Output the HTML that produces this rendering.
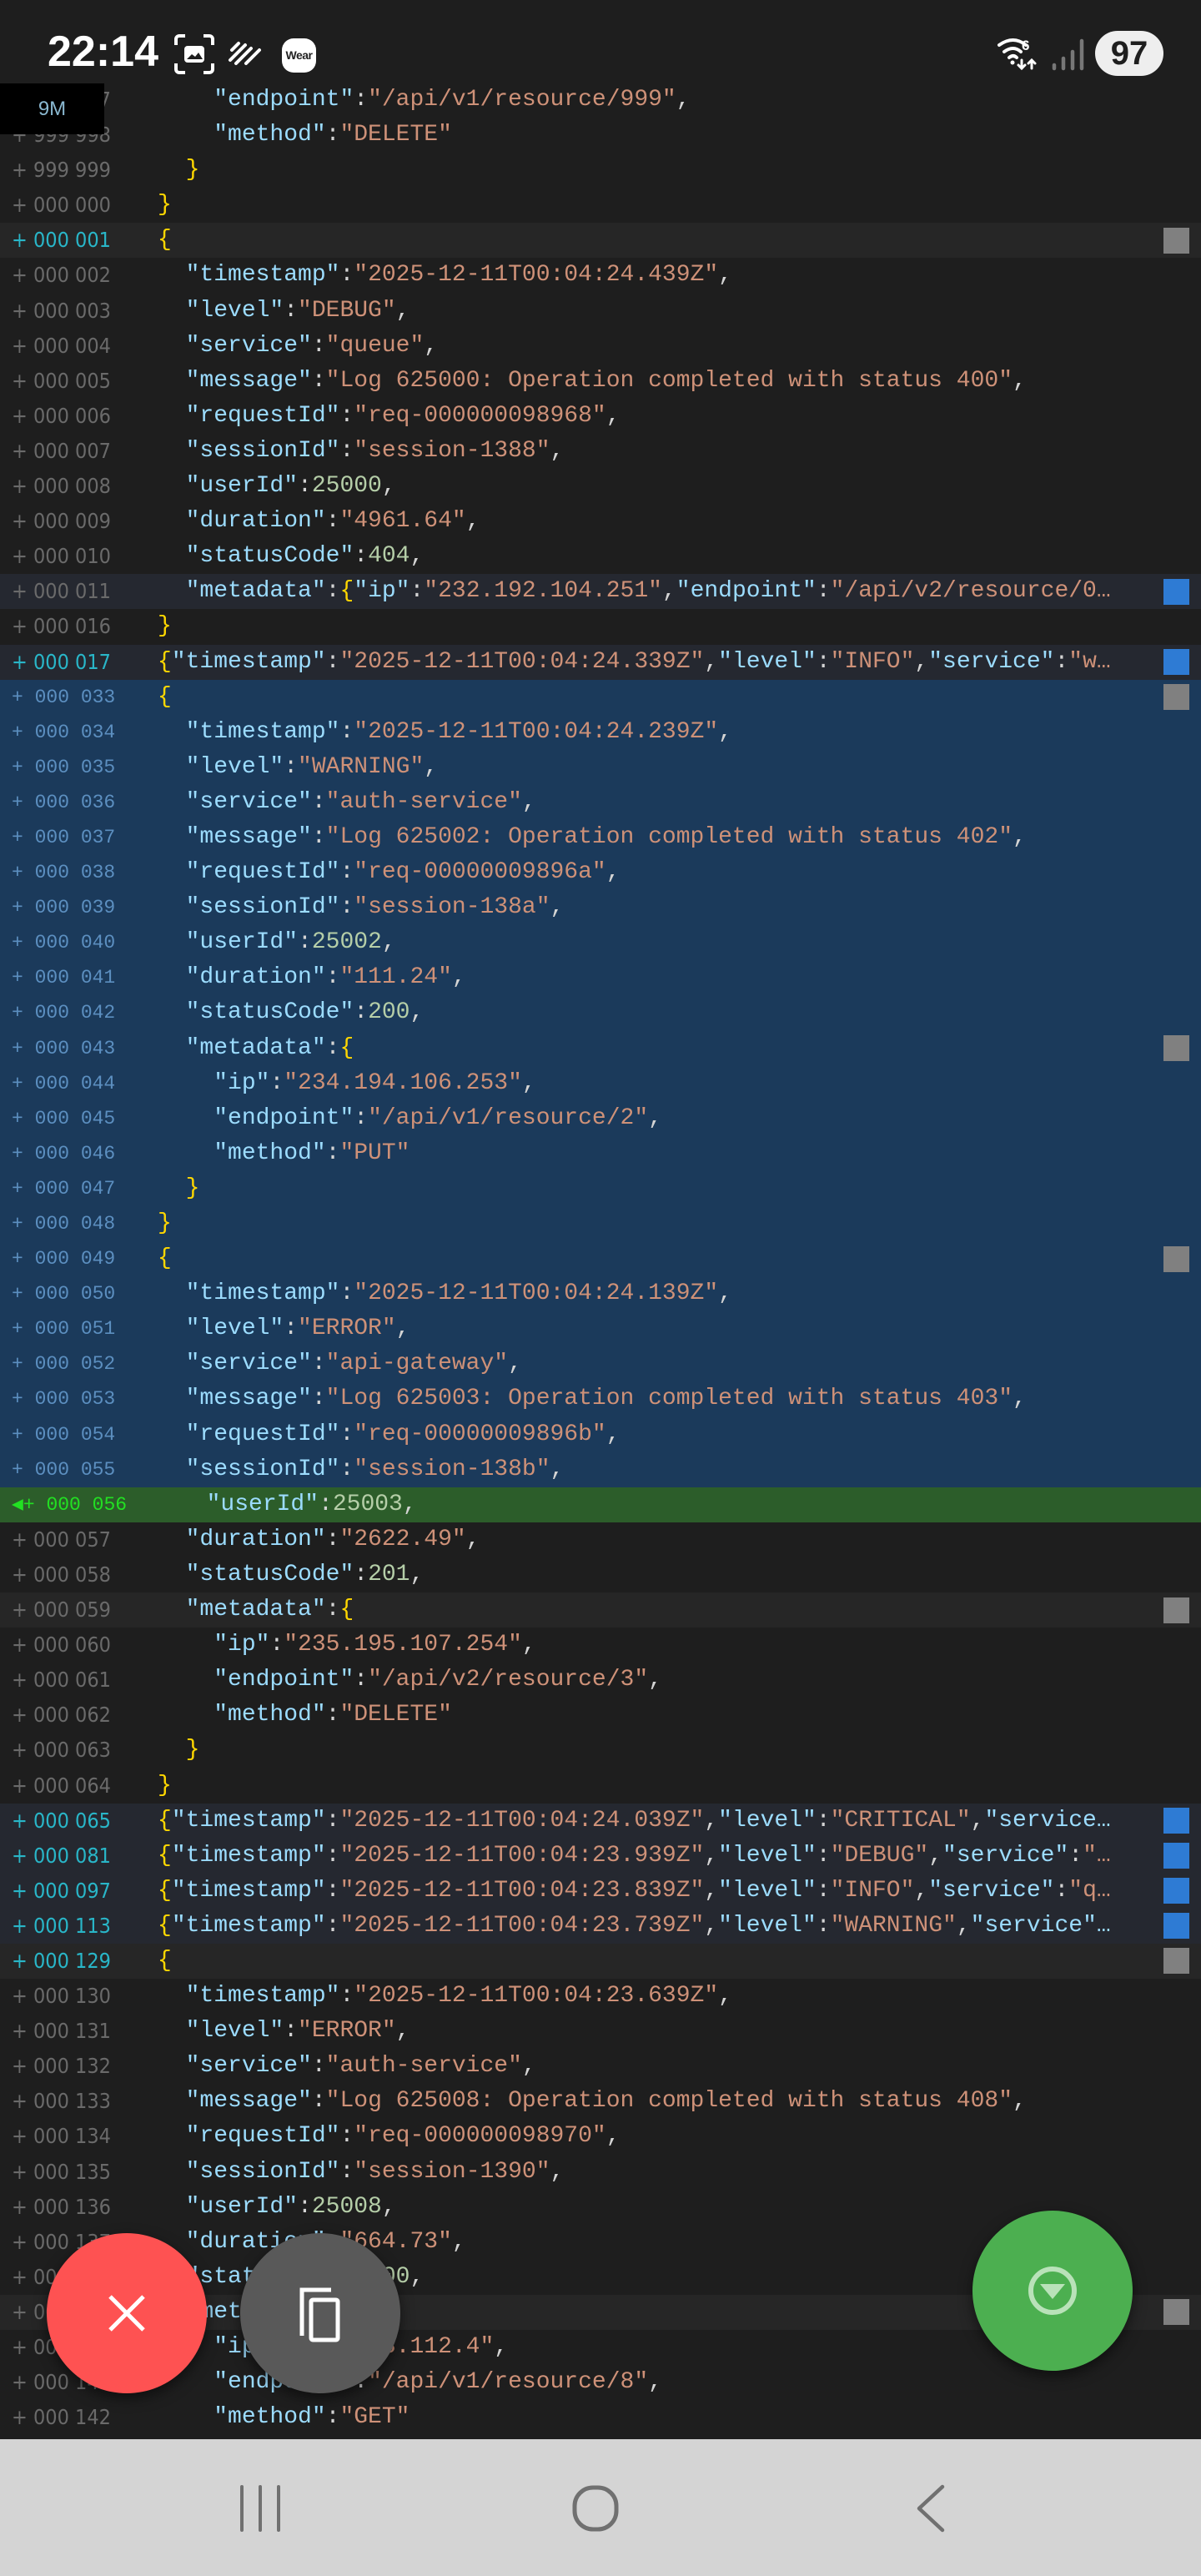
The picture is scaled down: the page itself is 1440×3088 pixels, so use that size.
<!DOCTYPE html>
<html><head><meta charset="utf-8"><style>
*{margin:0;padding:0;box-sizing:border-box}
body{width:1440px;height:3088px;background:#1e1e1e;position:relative;overflow:hidden;font-family:"Liberation Mono",monospace}
#rows{position:absolute;left:0;top:99px;width:1440px}
.r{position:relative;height:42.1px;width:1440px}
.ln{position:absolute;left:14px;top:0;line-height:42.1px;font-family:"Liberation Sans Narrow","DejaVu Sans Condensed","Liberation Sans",sans-serif;font-size:25px;color:#6a6a6a;white-space:pre}
.lb{font-family:"Liberation Mono",monospace;font-size:23px;color:#5c8fc0}
.cy{color:#29b6c8}
.lg{color:#22e022;font-family:"Liberation Mono",monospace;font-size:23px}
.c{position:absolute;left:189px;top:0;line-height:42.1px;font-size:28px;white-space:pre;color:#d4d4d4}
.k{color:#9cdcfe}.s{color:#ce9178}.n{color:#b5cea8}.b{color:#ffd700}
.g1{background:#262626}.g2{background:#252830}.bl{background:#1b3a5b}.gr{background:#2c5d2a}
.sq{position:absolute;left:1395px;top:5.5px;width:31px;height:31px;background:#808080}
.sq.u{background:#2e7bd4}
.fab{position:absolute;border-radius:50%;box-shadow:0 6px 16px rgba(0,0,0,.5)}
</style></head><body>
<!-- status bar -->
<div style="position:absolute;left:57px;top:30px;font-family:'Liberation Sans',sans-serif;font-weight:bold;font-size:52px;color:#fff;line-height:64px">22:14</div>
<svg style="position:absolute;left:208px;top:40px" width="50" height="50" viewBox="0 0 50 50" fill="none" stroke="#fff" stroke-width="4"><path d="M3 14V7a4 4 0 0 1 4-4h7M36 3h7a4 4 0 0 1 4 4v7M47 36v7a4 4 0 0 1-4 4h-7M14 47H7a4 4 0 0 1-4-4v-7"/><rect x="13" y="15" width="24" height="20" rx="4" fill="#fff" stroke="none"/><path d="M16 31l6-6 4 3 4-5 5 8z" fill="#1e1e1e" stroke="none"/></svg>
<svg style="position:absolute;left:273px;top:45px" width="45" height="40" viewBox="0 0 45 40" stroke="#fff" stroke-width="4" stroke-linecap="round"><path d="M5 15l8-8M3 27l18-18M10 31l18-18M22 31l16-16"/></svg>
<div style="position:absolute;left:338px;top:46px;width:41px;height:41px;border-radius:14px;background:#fff;color:#222;font-family:'Liberation Sans',sans-serif;font-weight:bold;font-size:14px;line-height:41px;text-align:center;letter-spacing:-0.5px">Wear</div>
<svg style="position:absolute;left:1195px;top:42px" width="60" height="45" viewBox="0 0 60 45" fill="none" stroke="#fff" stroke-width="4" stroke-linecap="round"><path d="M3 12q17-12 32 0M9 20q11-8 20 0M15 27q5-4 9 0"/><circle cx="19" cy="33" r="2.5" fill="#fff" stroke="none"/><path d="M30 30v10M26 36l4 4 4-4M42 40V30M38 34l4-4 4 4" stroke-width="3"/><text x="30" y="18" fill="#fff" stroke="none" font-family="Liberation Sans" font-weight="bold" font-size="17">6</text></svg>
<svg style="position:absolute;left:1260px;top:44px" width="42" height="42" viewBox="0 0 42 42" stroke="#777" stroke-width="4.5" stroke-linecap="round"><path d="M4 38v-4M15 38v-12M26 38V18M37 38V5"/></svg>
<div style="position:absolute;left:1313px;top:37px;width:82px;height:54px;border-radius:27px;background:#eee;color:#1e1e1e;font-family:'Liberation Sans',sans-serif;font-weight:bold;font-size:40px;line-height:54px;text-align:center">97</div>

<div id="rows">
<div class="r"><span class="ln">+ 999 997</span><span class="c">    <span class="k">"endpoint"</span>:<span class="s">"/api/v1/resource/999"</span>,</span></div>
<div class="r"><span class="ln">+ 999 998</span><span class="c">    <span class="k">"method"</span>:<span class="s">"DELETE"</span></span></div>
<div class="r"><span class="ln">+ 999 999</span><span class="c">  <span class="b">}</span></span></div>
<div class="r"><span class="ln">+ 000 000</span><span class="c"><span class="b">}</span></span></div>
<div class="r g1"><span class="ln cy">+ 000 001</span><span class="c"><span class="b">{</span></span><span class="sq"></span></div>
<div class="r"><span class="ln">+ 000 002</span><span class="c">  <span class="k">"timestamp"</span>:<span class="s">"2025-12-11T00:04:24.439Z"</span>,</span></div>
<div class="r"><span class="ln">+ 000 003</span><span class="c">  <span class="k">"level"</span>:<span class="s">"DEBUG"</span>,</span></div>
<div class="r"><span class="ln">+ 000 004</span><span class="c">  <span class="k">"service"</span>:<span class="s">"queue"</span>,</span></div>
<div class="r"><span class="ln">+ 000 005</span><span class="c">  <span class="k">"message"</span>:<span class="s">"Log 625000: Operation completed with status 400"</span>,</span></div>
<div class="r"><span class="ln">+ 000 006</span><span class="c">  <span class="k">"requestId"</span>:<span class="s">"req-000000098968"</span>,</span></div>
<div class="r"><span class="ln">+ 000 007</span><span class="c">  <span class="k">"sessionId"</span>:<span class="s">"session-1388"</span>,</span></div>
<div class="r"><span class="ln">+ 000 008</span><span class="c">  <span class="k">"userId"</span>:<span class="n">25000</span>,</span></div>
<div class="r"><span class="ln">+ 000 009</span><span class="c">  <span class="k">"duration"</span>:<span class="s">"4961.64"</span>,</span></div>
<div class="r"><span class="ln">+ 000 010</span><span class="c">  <span class="k">"statusCode"</span>:<span class="n">404</span>,</span></div>
<div class="r g2"><span class="ln">+ 000 011</span><span class="c">  <span class="k">"metadata"</span>:<span class="b">{</span><span class="k">"ip"</span>:<span class="s">"232.192.104.251"</span>,<span class="k">"endpoint"</span>:<span class="s">"/api/v2/resource/0…</span></span><span class="sq u"></span></div>
<div class="r"><span class="ln">+ 000 016</span><span class="c"><span class="b">}</span></span></div>
<div class="r g2"><span class="ln cy">+ 000 017</span><span class="c"><span class="b">{</span><span class="k">"timestamp"</span>:<span class="s">"2025-12-11T00:04:24.339Z"</span>,<span class="k">"level"</span>:<span class="s">"INFO"</span>,<span class="k">"service"</span>:<span class="s">"w…</span></span><span class="sq u"></span></div>
<div class="r bl"><span class="ln lb">+ 000 033</span><span class="c"><span class="b">{</span></span><span class="sq"></span></div>
<div class="r bl"><span class="ln lb">+ 000 034</span><span class="c">  <span class="k">"timestamp"</span>:<span class="s">"2025-12-11T00:04:24.239Z"</span>,</span></div>
<div class="r bl"><span class="ln lb">+ 000 035</span><span class="c">  <span class="k">"level"</span>:<span class="s">"WARNING"</span>,</span></div>
<div class="r bl"><span class="ln lb">+ 000 036</span><span class="c">  <span class="k">"service"</span>:<span class="s">"auth-service"</span>,</span></div>
<div class="r bl"><span class="ln lb">+ 000 037</span><span class="c">  <span class="k">"message"</span>:<span class="s">"Log 625002: Operation completed with status 402"</span>,</span></div>
<div class="r bl"><span class="ln lb">+ 000 038</span><span class="c">  <span class="k">"requestId"</span>:<span class="s">"req-00000009896a"</span>,</span></div>
<div class="r bl"><span class="ln lb">+ 000 039</span><span class="c">  <span class="k">"sessionId"</span>:<span class="s">"session-138a"</span>,</span></div>
<div class="r bl"><span class="ln lb">+ 000 040</span><span class="c">  <span class="k">"userId"</span>:<span class="n">25002</span>,</span></div>
<div class="r bl"><span class="ln lb">+ 000 041</span><span class="c">  <span class="k">"duration"</span>:<span class="s">"111.24"</span>,</span></div>
<div class="r bl"><span class="ln lb">+ 000 042</span><span class="c">  <span class="k">"statusCode"</span>:<span class="n">200</span>,</span></div>
<div class="r bl"><span class="ln lb">+ 000 043</span><span class="c">  <span class="k">"metadata"</span>:<span class="b">{</span></span><span class="sq"></span></div>
<div class="r bl"><span class="ln lb">+ 000 044</span><span class="c">    <span class="k">"ip"</span>:<span class="s">"234.194.106.253"</span>,</span></div>
<div class="r bl"><span class="ln lb">+ 000 045</span><span class="c">    <span class="k">"endpoint"</span>:<span class="s">"/api/v1/resource/2"</span>,</span></div>
<div class="r bl"><span class="ln lb">+ 000 046</span><span class="c">    <span class="k">"method"</span>:<span class="s">"PUT"</span></span></div>
<div class="r bl"><span class="ln lb">+ 000 047</span><span class="c">  <span class="b">}</span></span></div>
<div class="r bl"><span class="ln lb">+ 000 048</span><span class="c"><span class="b">}</span></span></div>
<div class="r bl"><span class="ln lb">+ 000 049</span><span class="c"><span class="b">{</span></span><span class="sq"></span></div>
<div class="r bl"><span class="ln lb">+ 000 050</span><span class="c">  <span class="k">"timestamp"</span>:<span class="s">"2025-12-11T00:04:24.139Z"</span>,</span></div>
<div class="r bl"><span class="ln lb">+ 000 051</span><span class="c">  <span class="k">"level"</span>:<span class="s">"ERROR"</span>,</span></div>
<div class="r bl"><span class="ln lb">+ 000 052</span><span class="c">  <span class="k">"service"</span>:<span class="s">"api-gateway"</span>,</span></div>
<div class="r bl"><span class="ln lb">+ 000 053</span><span class="c">  <span class="k">"message"</span>:<span class="s">"Log 625003: Operation completed with status 403"</span>,</span></div>
<div class="r bl"><span class="ln lb">+ 000 054</span><span class="c">  <span class="k">"requestId"</span>:<span class="s">"req-00000009896b"</span>,</span></div>
<div class="r bl"><span class="ln lb">+ 000 055</span><span class="c">  <span class="k">"sessionId"</span>:<span class="s">"session-138b"</span>,</span></div>
<div class="r gr"><span class="ln lg">◀+ 000 056</span><span class="c" style="left:214px">  <span class="k">"userId"</span>:<span class="n">25003</span>,</span></div>
<div class="r"><span class="ln">+ 000 057</span><span class="c">  <span class="k">"duration"</span>:<span class="s">"2622.49"</span>,</span></div>
<div class="r"><span class="ln">+ 000 058</span><span class="c">  <span class="k">"statusCode"</span>:<span class="n">201</span>,</span></div>
<div class="r g1"><span class="ln">+ 000 059</span><span class="c">  <span class="k">"metadata"</span>:<span class="b">{</span></span><span class="sq"></span></div>
<div class="r"><span class="ln">+ 000 060</span><span class="c">    <span class="k">"ip"</span>:<span class="s">"235.195.107.254"</span>,</span></div>
<div class="r"><span class="ln">+ 000 061</span><span class="c">    <span class="k">"endpoint"</span>:<span class="s">"/api/v2/resource/3"</span>,</span></div>
<div class="r"><span class="ln">+ 000 062</span><span class="c">    <span class="k">"method"</span>:<span class="s">"DELETE"</span></span></div>
<div class="r"><span class="ln">+ 000 063</span><span class="c">  <span class="b">}</span></span></div>
<div class="r"><span class="ln">+ 000 064</span><span class="c"><span class="b">}</span></span></div>
<div class="r g2"><span class="ln cy">+ 000 065</span><span class="c"><span class="b">{</span><span class="k">"timestamp"</span>:<span class="s">"2025-12-11T00:04:24.039Z"</span>,<span class="k">"level"</span>:<span class="s">"CRITICAL"</span>,<span class="k">"service…</span></span><span class="sq u"></span></div>
<div class="r g2"><span class="ln cy">+ 000 081</span><span class="c"><span class="b">{</span><span class="k">"timestamp"</span>:<span class="s">"2025-12-11T00:04:23.939Z"</span>,<span class="k">"level"</span>:<span class="s">"DEBUG"</span>,<span class="k">"service"</span>:<span class="s">"…</span></span><span class="sq u"></span></div>
<div class="r g2"><span class="ln cy">+ 000 097</span><span class="c"><span class="b">{</span><span class="k">"timestamp"</span>:<span class="s">"2025-12-11T00:04:23.839Z"</span>,<span class="k">"level"</span>:<span class="s">"INFO"</span>,<span class="k">"service"</span>:<span class="s">"q…</span></span><span class="sq u"></span></div>
<div class="r g2"><span class="ln cy">+ 000 113</span><span class="c"><span class="b">{</span><span class="k">"timestamp"</span>:<span class="s">"2025-12-11T00:04:23.739Z"</span>,<span class="k">"level"</span>:<span class="s">"WARNING"</span>,<span class="k">"service"…</span></span><span class="sq u"></span></div>
<div class="r g1"><span class="ln cy">+ 000 129</span><span class="c"><span class="b">{</span></span><span class="sq"></span></div>
<div class="r"><span class="ln">+ 000 130</span><span class="c">  <span class="k">"timestamp"</span>:<span class="s">"2025-12-11T00:04:23.639Z"</span>,</span></div>
<div class="r"><span class="ln">+ 000 131</span><span class="c">  <span class="k">"level"</span>:<span class="s">"ERROR"</span>,</span></div>
<div class="r"><span class="ln">+ 000 132</span><span class="c">  <span class="k">"service"</span>:<span class="s">"auth-service"</span>,</span></div>
<div class="r"><span class="ln">+ 000 133</span><span class="c">  <span class="k">"message"</span>:<span class="s">"Log 625008: Operation completed with status 408"</span>,</span></div>
<div class="r"><span class="ln">+ 000 134</span><span class="c">  <span class="k">"requestId"</span>:<span class="s">"req-000000098970"</span>,</span></div>
<div class="r"><span class="ln">+ 000 135</span><span class="c">  <span class="k">"sessionId"</span>:<span class="s">"session-1390"</span>,</span></div>
<div class="r"><span class="ln">+ 000 136</span><span class="c">  <span class="k">"userId"</span>:<span class="n">25008</span>,</span></div>
<div class="r"><span class="ln">+ 000 137</span><span class="c">  <span class="k">"duration"</span>:<span class="s">"664.73"</span>,</span></div>
<div class="r"><span class="ln">+ 000 138</span><span class="c">  <span class="k">"statusCode"</span>:<span class="n">500</span>,</span></div>
<div class="r g1"><span class="ln">+ 000 139</span><span class="c">  <span class="k">"metadata"</span>:<span class="b">{</span></span><span class="sq"></span></div>
<div class="r"><span class="ln">+ 000 140</span><span class="c">    <span class="k">"ip"</span>:<span class="s">"238.198.112.4"</span>,</span></div>
<div class="r"><span class="ln">+ 000 141</span><span class="c">    <span class="k">"endpoint"</span>:<span class="s">"/api/v1/resource/8"</span>,</span></div>
<div class="r"><span class="ln">+ 000 142</span><span class="c">    <span class="k">"method"</span>:<span class="s">"GET"</span></span></div>
</div>

<!-- 9M box -->
<div style="position:absolute;left:0;top:100px;width:125px;height:61px;background:#000;color:#8ab8d0;font-family:'Liberation Sans Narrow','Liberation Sans',sans-serif;font-size:24px;line-height:61px;text-align:center">9M</div>

<!-- FABs -->
<div class="fab" style="left:56px;top:2677px;width:192px;height:192px;background:#fe5252"></div>
<svg style="position:absolute;left:124px;top:2745px" width="56" height="56" viewBox="0 0 56 56" stroke="#fff" stroke-width="5"><path d="M8 8l40 40M48 8L8 48"/></svg>
<div class="fab" style="left:288px;top:2677px;width:192px;height:192px;background:#595959"></div>
<svg style="position:absolute;left:345px;top:2735px" width="80" height="80" viewBox="0 0 80 80" fill="none" stroke="#fff" stroke-width="5"><path d="M52 10H17v55"/><rect x="28" y="22" width="32" height="48" rx="2"/></svg>
<div class="fab" style="left:1166px;top:2650px;width:192px;height:192px;background:#4caf50"></div>
<svg style="position:absolute;left:1230px;top:2714px" width="64" height="64" viewBox="0 0 64 64"><circle cx="32" cy="32" r="26" fill="none" stroke="#b9e2b9" stroke-width="6"/><path d="M17 24h30L32 42z" fill="#b9e2b9"/></svg>

<!-- nav bar -->
<div style="position:absolute;left:0;top:2924px;width:1440px;height:164px;background:#d4d4d4"></div>
<svg style="position:absolute;left:280px;top:2975px" width="64" height="64" viewBox="0 0 64 64" stroke="#707070" stroke-width="4" stroke-linecap="round"><path d="M10 6v52M32 6v52M54 6v52"/></svg>
<svg style="position:absolute;left:682px;top:2975px" width="64" height="64" viewBox="0 0 64 64" fill="none" stroke="#707070" stroke-width="5"><rect x="7" y="7" width="50" height="50" rx="22"/></svg>
<svg style="position:absolute;left:1088px;top:2975px" width="56" height="64" viewBox="0 0 56 64" fill="none" stroke="#707070" stroke-width="4.5" stroke-linecap="round" stroke-linejoin="round"><path d="M42 6L14 32l28 26"/></svg>
</body></html>
